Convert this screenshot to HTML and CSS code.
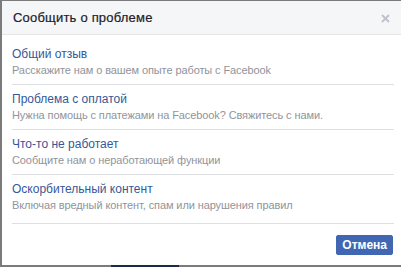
FILE: index.html
```html
<!DOCTYPE html>
<html lang="ru">
<head>
    <meta charset="UTF-8">
    <title>Сообщить о проблеме</title>
    <link rel="stylesheet" href="styles.css">
</head>
<body>
    <div class="dialog">
        <!-- Header -->
        <div class="dialog-header">
            <span class="dialog-title">Сообщить о проблеме</span>
            <svg class="close" width="9" height="9" viewBox="0 0 9 9">
                <path d="M1 1 L8 8 M8 1 L1 8" stroke="#bec2c9" stroke-width="1.8" fill="none"/>
            </svg>
        </div>

        <!-- Options -->
        <div class="options">
            <div class="option">
                <div class="option-title">Общий отзыв</div>
                <div class="option-desc">Расскажите нам о вашем опыте работы с Facebook</div>
            </div>
            <div class="option">
                <div class="option-title">Проблема с оплатой</div>
                <div class="option-desc">Нужна помощь с платежами на Facebook? Свяжитесь с нами.</div>
            </div>
            <div class="option">
                <div class="option-title">Что-то не работает</div>
                <div class="option-desc">Сообщите нам о неработающей функции</div>
            </div>
            <div class="option">
                <div class="option-title">Оскорбительный контент</div>
                <div class="option-desc">Включая вредный контент, спам или нарушения правил</div>
            </div>
        </div>

        <!-- Footer -->
        <div class="dialog-footer">
            <button class="btn-cancel">Отмена</button>
        </div>
    </div>
    <div class="page-bar"></div>
</body>
</html>
```

FILE: styles.css
```css
/* General */
body {
    margin: 0;
    padding: 1px 0 0 2px;
    background: #7b7b7b;
    font-family: 'Liberation Sans', Arial, sans-serif;
    height: 267px;
    box-sizing: border-box;
    overflow: hidden;
}

/* Dialog */
.dialog {
    background: #fff;
    width: 399px;
    height: 264px;
    display: flex;
    flex-direction: column;
}

.dialog-header {
    display: flex;
    justify-content: space-between;
    align-items: center;
    background: #f5f6f7;
    border-bottom: 1px solid #e5e5e5;
    padding: 8px 11px 7px 11px;
    height: 18px;
}

.dialog-title {
    font-size: 13px;
    line-height: 18px;
    letter-spacing: 0.2px;
    color: #1d2129;
    -webkit-text-stroke: 0.2px #1d2129;
}

.close {
    display: block;
    margin-top: 1px;
}

/* Options list */
.options {
    padding: 5px 7px 4px 10px;
}

.option {
    padding: 6px 0 6px 0;
    border-bottom: 1px solid #dddfe2;
}

.option:last-child {
    border-bottom: none;
}

.option-title {
    font-size: 12px;
    line-height: 16px;
    color: #365899;
}

.option-desc {
    font-size: 11px;
    line-height: 16px;
    letter-spacing: -0.1px;
    color: #90949c;
}

/* Footer */
.dialog-footer {
    margin: 0 7px 0 10px;
    border-top: 1px solid #dddfe2;
    padding: 11px 1px;
    display: flex;
    justify-content: flex-end;
}

.btn-cancel {
    background: #4267b2;
    border: 1px solid #4267b2;
    border-radius: 2px;
    color: #fff;
    font-family: 'Liberation Sans', Arial, sans-serif;
    font-size: 12px;
    font-weight: bold;
    height: 20px;
    padding: 0 5px;
    line-height: 18px;
}

.page-bar {
    margin-left: 109px;
    width: 68px;
    height: 2px;
    background: #1c2a48;
}
```
